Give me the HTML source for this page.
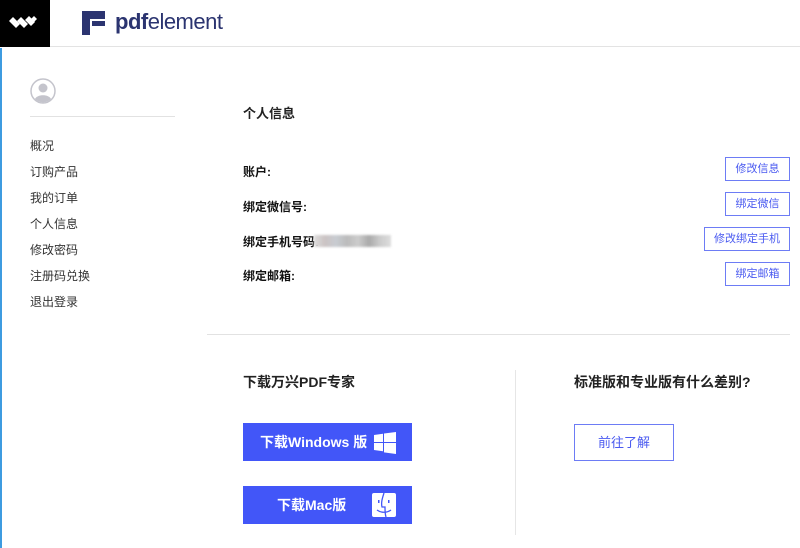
<!DOCTYPE html>
<html><head><meta charset="utf-8"><style>
*{margin:0;padding:0;box-sizing:border-box}
body{width:800px;height:548px;overflow:hidden;background:#fff;font-family:"Liberation Sans","Noto Sans CJK SC",sans-serif;color:#222;position:relative}
.abs{position:absolute}
.hdr{left:0;top:0;width:800px;height:47px;border-bottom:1px solid #e3e3e3}
.logo{left:0;top:0;width:50px;height:47px;background:#000}
.side{left:0;top:48px;width:2px;height:500px;background:#3d9be0}
.nav{left:30px;font-size:12px;color:#333}
.lbl{left:243px;font-size:12px;font-weight:bold;color:#111}
.btn{border:1px solid #6d7cf5;color:#4a5af0;font-size:11px;text-align:center;height:24px;line-height:22px;background:#fff}
.dl{left:243px;width:169px;height:38px;background:#4256f8;color:#fff;font-size:14px;font-weight:bold;line-height:38px}
</style></head><body>
<div class="abs hdr"></div>
<div class="abs logo"><svg width="50" height="47" viewBox="0 0 50 47"><g fill="#fff"><path d="M9 21l4-4 7 7-4 4z"/><path d="M17 21l4-4 7 7-4 4z"/><path d="M25 20l4-4 6 6-4 4z"/><path d="M31 19l3-3 3 3-3 3z"/></g></svg></div>
<svg class="abs" style="left:82px;top:11px" width="24" height="24" viewBox="0 0 24 24"><path d="M0 0h23v8H8v16H0z" fill="#2b3470"/><path d="M10 10h13v5H10z" fill="#2b3470"/></svg>
<div class="abs" style="left:115px;top:9px;font-size:22px;color:#2b3470;letter-spacing:-0.5px"><b>pdf</b>element</div>
<div class="abs side"></div>
<svg class="abs" style="left:30px;top:78px" width="26" height="26" viewBox="0 0 26 26"><circle cx="13" cy="13" r="12" fill="#fff" stroke="#c4c4cc" stroke-width="1.5"/><circle cx="13" cy="10" r="4.5" fill="#c4c4cc"/><path d="M5 21c2-5 14-5 16 0a11 11 0 0 1-16 0z" fill="#c4c4cc"/></svg>
<div class="abs" style="left:30px;top:116px;width:145px;height:1px;background:#e2e2e2"></div>
<div class="abs nav" style="top:137px">概况</div>
<div class="abs nav" style="top:163px">订购产品</div>
<div class="abs nav" style="top:189px">我的订单</div>
<div class="abs nav" style="top:215px">个人信息</div>
<div class="abs nav" style="top:241px">修改密码</div>
<div class="abs nav" style="top:267px">注册码兑换</div>
<div class="abs nav" style="top:293px">退出登录</div>
<div class="abs" style="left:243px;top:103px;font-size:13px;font-weight:bold">个人信息</div>
<div class="abs lbl" style="top:163px">账户:</div>
<div class="abs lbl" style="top:198px">绑定微信号:</div>
<div class="abs lbl" style="top:233px">绑定手机号码:</div>
<div class="abs" style="left:314px;top:235px;width:77px;height:12px;background:linear-gradient(90deg,#ddd,#cbc3c3,#c8ccd2,#bbb,#ccc,#aaa,#ccc,#ddd);filter:blur(1px)"></div>
<div class="abs lbl" style="top:267px">绑定邮箱:</div>
<div class="abs btn" style="left:725px;top:157px;width:65px">修改信息</div>
<div class="abs btn" style="left:725px;top:192px;width:65px">绑定微信</div>
<div class="abs btn" style="left:704px;top:227px;width:86px">修改绑定手机</div>
<div class="abs btn" style="left:725px;top:262px;width:65px">绑定邮箱</div>
<div class="abs" style="left:207px;top:334px;width:583px;height:1px;background:#e2e2e2"></div>
<div class="abs" style="left:515px;top:370px;width:1px;height:165px;background:#e6e6e6"></div>
<div class="abs" style="left:243px;top:372px;font-size:14px;font-weight:bold">下载万兴PDF专家</div>
<div class="abs" style="left:574px;top:372px;font-size:14px;font-weight:bold">标准版和专业版有什么差别?</div>
<div class="abs dl" style="top:423px"><span style="position:absolute;left:17px">下载Windows 版</span>
<svg style="position:absolute;left:131px;top:9px" width="22" height="22" viewBox="0 0 22 22"><path d="M0 3l9-1.3V10H0zM10 1.5L22 0v10H10zM0 11h9v8.3L0 18zM10 11h12v11l-12-1.6z" fill="#fff"/></svg></div>
<div class="abs dl" style="top:486px"><span style="position:absolute;left:34px">下载Mac版</span>
<svg style="position:absolute;left:129px;top:7px" width="24" height="24" viewBox="0 0 24 24"><rect width="24" height="24" rx="2" fill="#fff"/><path d="M12 0c-2 6-3 10-2 14h3c0 4 0 7 1 10" stroke="#4256f8" stroke-width="1.3" fill="none"/><path d="M5 17c4 3 10 3 14 0" stroke="#4256f8" stroke-width="1.3" fill="none"/><rect x="6" y="7" width="1.5" height="3" fill="#4256f8"/><rect x="16" y="7" width="1.5" height="3" fill="#4256f8"/></svg></div>
<div class="abs" style="left:574px;top:424px;width:100px;height:37px;border:1px solid #6d7cf5;color:#4a5af0;font-size:13px;text-align:center;line-height:35px">前往了解</div>
</body></html>
